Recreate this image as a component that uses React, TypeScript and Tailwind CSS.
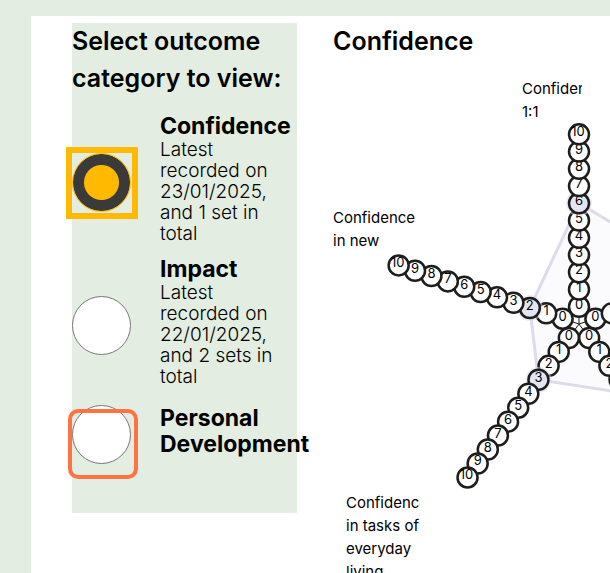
const CENTER = { x: 246, y: 264 };
const STEP = 17.24;

const spokes = [
  { angle: -90, value: 6 },
  { angle: -18, value: 7 },
  { angle: 54, value: 4 },
  { angle: 126, value: 3 },
  { angle: 198, value: 2 },
];

const labels = [
  { text: 'Confidence 1:1', place: 'left-[189px] top-[17px] w-[60px]' },
  { text: 'Confidence in new', place: 'left-0 top-[146px] w-[84px]' },
  { text: 'Confidence in tasks of everyday living', place: 'left-[13px] top-[431px] w-[74px]' },
];

const categories = [
  { id: 'confidence', name: 'Confidence', detail: 'Latest recorded on 23/01/2025, and 1 set in total', gap: 'mt-4' },
  { id: 'impact', name: 'Impact', detail: 'Latest recorded on 22/01/2025, and 2 sets in total', gap: 'mt-3' },
  { id: 'personal', name: 'Personal Development', detail: '', gap: 'mt-2.5' },
];

function point(angle: number, index: number) {
  const a = (angle * Math.PI) / 180;
  const r = STEP * (index + 1);
  return { x: CENTER.x + r * Math.cos(a), y: CENTER.y + r * Math.sin(a) };
}

function StarChart() {
  const outline = spokes
    .map((s) => {
      const p = point(s.angle, s.value);
      return `${p.x},${p.y}`;
    })
    .join(' ');
  return (
    <svg width="500" height="560" className="block max-w-none" role="img" aria-label="Confidence star chart">
      <polygon points={outline} fill="#fbfbfd" stroke="#dcdcea" strokeWidth="3" />
      {spokes.map((s) => {
        const end = point(s.angle, 10);
        return (
          <g key={s.angle}>
            <line x1={CENTER.x} y1={CENTER.y} x2={end.x} y2={end.y} stroke="#1d1d1b" strokeWidth="1" />
            {Array.from({ length: 11 }, (_, i) => {
              const p = point(s.angle, i);
              const chosen = i === s.value;
              return (
                <g key={i}>
                  {chosen && <circle cx={p.x} cy={p.y} r="13" fill="#dadaf0" opacity="0.5" />}
                  <circle cx={p.x} cy={p.y} r="10" fill={chosen ? '#e4e5f4' : '#fefefe'} stroke="#1d1d1b" strokeWidth="2.5" />
                  <text x={i === 10 ? p.x - 1 : p.x} y={p.y + 2} textAnchor="middle" fontSize="13" fill="#000">
                    {i}
                  </text>
                </g>
              );
            })}
          </g>
        );
      })}
    </svg>
  );
}

export default function App() {
  return (
    <div className="h-screen overflow-hidden bg-[#e4ede1] pl-[31px] pt-4 font-['Inter','Liberation_Sans',sans-serif] text-black">
      <main className="flex min-h-full bg-white pl-[41px] pt-[7px]">
        <fieldset className="w-[225px] shrink-0 self-start bg-[#e4ede1] pb-[49px]">
          <legend className="float-left w-full text-[25px]/[37px] font-semibold">
            Select outcome category to view:
          </legend>
          <div className="clear-both flex flex-col">
            {categories.map((c) => (
              <div key={c.id} className={`flex items-center gap-[29px] ${c.gap}`}>
                <div className="shrink-0 pt-2">
                  <div className="relative size-[59px]">
                    <input
                      type="radio"
                      id={c.id}
                      name="category"
                      defaultChecked={c.id === 'confidence'}
                      className="block size-[59px] appearance-none rounded-full border border-[#777] bg-white checked:border-[#ffb900] checked:bg-[radial-gradient(circle,#ffb900_17px,#3a3a3a_18px,#3a3a3a_28px,#ffb900_29px)]"
                    />
                    {c.id === 'confidence' && (
                      <span className="pointer-events-none absolute -inset-1.5 size-[72px] border-6 border-[#ffb900]" />
                    )}
                    {c.id === 'personal' && (
                      <span className="pointer-events-none absolute -left-1 top-1 size-[70px] rounded-[10px] border-4 border-[#ff7342]" />
                    )}
                  </div>
                </div>
                <label htmlFor={c.id} className="w-[125px]">
                  <span className="block text-[23px]/[26px] font-bold">{c.name}</span>
                  {c.detail && <span className="block text-[19px]/[21px] font-light">{c.detail}</span>}
                </label>
              </div>
            ))}
          </div>
        </fieldset>
        <section className="ml-9 min-w-0 flex-1 overflow-hidden">
          <h2 className="text-[25px]/[37px] font-semibold">Confidence</h2>
          <div className="relative">
            <StarChart />
            {labels.map((l) => (
              <p key={l.text} className={`absolute overflow-hidden text-[15px]/[23px] ${l.place}`}>
                {l.text}
              </p>
            ))}
          </div>
        </section>
      </main>
    </div>
  );
}
